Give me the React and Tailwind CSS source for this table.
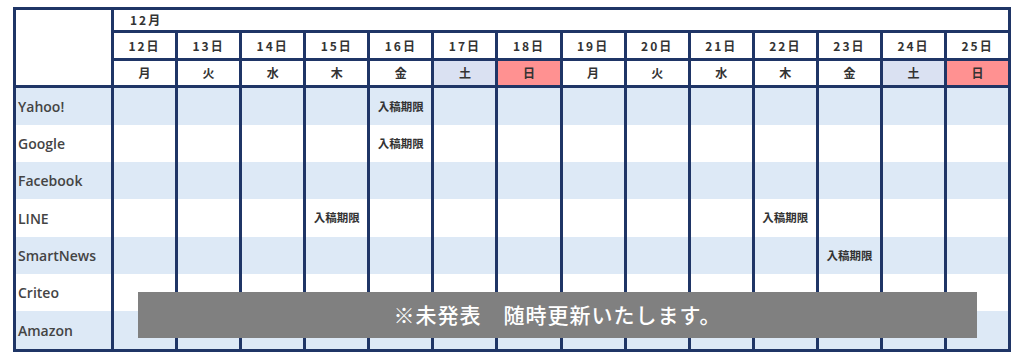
import React from 'react';

const NAVY = 'border-[#1f3566]';

const days = [
  { d: '12日', w: '月' },
  { d: '13日', w: '火' },
  { d: '14日', w: '水' },
  { d: '15日', w: '木' },
  { d: '16日', w: '金' },
  { d: '17日', w: '土' },
  { d: '18日', w: '日' },
  { d: '19日', w: '月' },
  { d: '20日', w: '火' },
  { d: '21日', w: '水' },
  { d: '22日', w: '木' },
  { d: '23日', w: '金' },
  { d: '24日', w: '土' },
  { d: '25日', w: '日' },
];

// deadline marks: media -> index of the day column
const rows = [
  { name: 'Yahoo!', h: 'h-[37px]', marks: [4] },
  { name: 'Google', h: 'h-[37px]', marks: [4] },
  { name: 'Facebook', h: 'h-[37px]', marks: [] },
  { name: 'LINE', h: 'h-[38px]', marks: [3, 10] },
  { name: 'SmartNews', h: 'h-[37px]', marks: [11] },
  { name: 'Criteo', h: 'h-[37px]', marks: [] },
  { name: 'Amazon', h: 'h-[38px]', marks: [] },
];

const jp = { fontFamily: '"Noto Sans CJK JP", "Noto Sans", sans-serif' };
const latin = { fontFamily: '"Open Sans", "Noto Sans CJK JP", sans-serif' };

function dayBg(w) {
  if (w === '土') return 'bg-[#dae1f2]';
  if (w === '日') return 'bg-[#ff9191]';
  return 'bg-white';
}

export default function App() {
  return (
    <div className="w-[1024px] h-[359px] bg-white pt-[7px] pl-[13px] text-[#333]" style={jp}>
      <div className={`relative w-[998px] border-[3px] ${NAVY}`}>
        {/* header */}
        <div className={`flex h-[78px] border-b-[3px] ${NAVY}`}>
          <div className="w-[95px] shrink-0 bg-white" />
          <div className={`flex-1 flex flex-col border-l-[3px] ${NAVY}`}>
            <div className={`h-[23px] border-b-[3px] ${NAVY} bg-white flex items-center pl-4 text-[12px] font-bold tracking-[2px]`}>
              12月
            </div>
            <div className={`h-[28px] flex border-b-[3px] ${NAVY}`}>
              {days.map((x, i) => (
                <div
                  key={x.d}
                  className={`flex-1 flex items-center justify-center bg-white text-[12px] font-bold tracking-[2px] ${i > 0 ? `border-l-[3px] ${NAVY}` : ''}`}
                >
                  {x.d}
                </div>
              ))}
            </div>
            <div className="flex-1 flex">
              {days.map((x, i) => (
                <div
                  key={x.d}
                  className={`flex-1 flex items-center justify-center text-[12px] font-bold ${dayBg(x.w)} ${i > 0 ? `border-l-[3px] ${NAVY}` : ''}`}
                >
                  {x.w}
                </div>
              ))}
            </div>
          </div>
        </div>

        {/* body */}
        {rows.map((r, ri) => (
          <div key={r.name} className={`flex ${r.h} ${ri % 2 === 0 ? 'bg-[#dde9f6]' : 'bg-white'}`}>
            <div className="w-[95px] shrink-0 flex items-center pl-[2px] text-[14px] font-semibold text-[#444]" style={latin}>
              {r.name}
            </div>
            {days.map((x, i) => (
              <div
                key={x.d}
                className={`flex-1 flex items-center justify-center border-l-[3px] ${NAVY} text-[11.5px] font-bold`}
              >
                {r.marks.includes(i) ? '入稿期限' : ''}
              </div>
            ))}
          </div>
        ))}

        {/* notice overlay */}
        <div className="absolute left-[122px] top-[282px] w-[839px] h-[46px] bg-[#808080] flex items-center justify-center text-white text-[21px] font-medium tracking-[1px]">
          ※未発表　随時更新いたします。
        </div>
      </div>
    </div>
  );
}
